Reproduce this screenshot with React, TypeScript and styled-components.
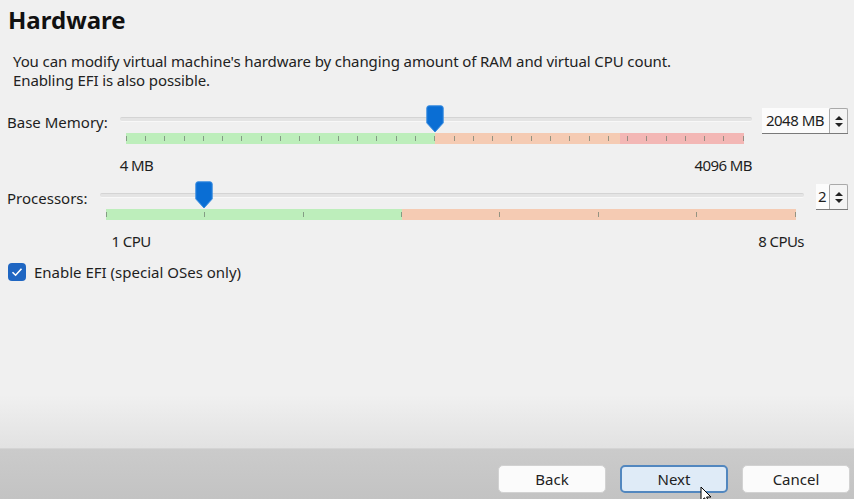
import React from 'react'
import styled, { createGlobalStyle } from 'styled-components'

const GlobalStyle = createGlobalStyle`
  html, body {
    margin: 0;
    padding: 0;
    background: #f0f0f0;
  }
  body {
    font-family: "Noto Sans", "Open Sans", sans-serif;
    color: #1e1e1e;
  }
`

type Zone = { until: number; color: string }

const Wizard = styled.div`
  width: 854px;
  height: 499px;
  display: flex;
  flex-direction: column;
  position: relative;
  overflow: hidden;
`

const Page = styled.div`
  flex: 1;
  padding: 5px 6px 0 7px;
  background: linear-gradient(to bottom, #f0f0f0 0, #f0f0f0 395px, #e2e2e2 447px);
`

const Title = styled.h1`
  margin: 0 0 0 1px;
  font-size: 24px;
  line-height: 30px;
  font-weight: 700;
  color: #111;
`

const Description = styled.p`
  margin: 17px 0 0 6px;
  font-size: 15px;
  line-height: 19px;
  color: #222;
  letter-spacing: -0.1px;
`

const SettingRow = styled.div<{ $top: number }>`
  display: flex;
  align-items: flex-start;
  margin-top: ${p => p.$top}px;
`

const FieldLabel = styled.div<{ $gap: number }>`
  font-size: 15px;
  line-height: 18px;
  margin-top: 8px;
  margin-right: ${p => p.$gap}px;
  white-space: nowrap;
`

const SliderCol = styled.div`
  flex: 1;
  display: flex;
  flex-direction: column;
`

const Track = styled.div`
  position: relative;
  height: 28px;
`

const Groove = styled.div`
  margin-top: 12px;
  height: 3px;
  background: #e4e4e4;
  border-top: 1px solid #d4d4d4;
  border-bottom: 1px solid #f8f8f8;
  border-radius: 2px;
`

const Handle = styled.svg`
  position: absolute;
  top: 0;
  width: 18px;
  height: 28px;
  margin-left: -9px;
`

const Bar = styled.div`
  margin: 0 8px 0 6px;
  height: 11px;
  display: flex;
  justify-content: space-between;
  align-items: center;
`

const Tick = styled.span`
  width: 1px;
  height: 5px;
  background: #6c7a6c;
  opacity: 0.7;
`

const Scale = styled.div<{ $inset: number }>`
  display: flex;
  justify-content: space-between;
  margin-top: 12px;
  padding-left: ${p => p.$inset}px;
  font-size: 15px;
  line-height: 18px;
  letter-spacing: -0.6px;
`

const SpinBox = styled.div<{ $gap: number }>`
  display: flex;
  margin-left: ${p => p.$gap}px;
  margin-top: 3px;
  height: 25px;
  border-bottom: 1px solid #7a7a7a;
`

const SpinValue = styled.div<{ $pad: number }>`
  background: #fcfcfc;
  font-size: 15px;
  line-height: 25px;
  padding: 0 ${p => p.$pad}px 0 ${p => p.$pad - 1}px;
  letter-spacing: -0.5px;
`

const SpinArrows = styled.div`
  width: 17px;
  display: flex;
  flex-direction: column;
  justify-content: center;
  align-items: center;
  gap: 3px;
  background: #f4f4f4;
  border: 1px solid #a9a9a9;
  border-bottom: none;
  border-radius: 2px 2px 0 0;
`

const Arrow = styled.span<{ $down?: boolean }>`
  width: 0;
  height: 0;
  border-left: 4px solid transparent;
  border-right: 4px solid transparent;
  ${p => (p.$down ? 'border-top: 4px solid #222;' : 'border-bottom: 4px solid #222;')}
`

const CheckRow = styled.label`
  display: flex;
  align-items: center;
  gap: 8px;
  margin-top: 13px;
  margin-left: 1px;
  font-size: 15px;
  line-height: 18px;
`

const CheckBox = styled.span`
  width: 18px;
  height: 18px;
  border-radius: 4px;
  background: #1f66c2;
  display: flex;
  align-items: center;
  justify-content: center;
`

const Footer = styled.div`
  height: 51px;
  box-sizing: border-box;
  background: linear-gradient(to bottom, #cbcbcb, #c3c3c3);
  border-top: 1px solid #d4d4d4;
  display: flex;
  justify-content: flex-end;
  align-items: flex-end;
  gap: 14px;
  padding: 0 4px 6px 0;
`

const Button = styled.button<{ $primary?: boolean }>`
  width: 108px;
  height: 28px;
  box-sizing: border-box;
  font-family: "Noto Sans", "Open Sans", sans-serif;
  font-size: 15px;
  color: #222;
  border-radius: 5px;
  background: ${p => (p.$primary ? '#dfebf7' : '#fbfbfb')};
  border: ${p => (p.$primary ? '2px solid #5287bf' : '1px solid #d2d2d2')};
  padding: 0;
`

const Cursor = styled.svg`
  position: absolute;
  left: 700px;
  top: 486px;
  width: 12px;
  height: 18px;
`

function Slider({
  value,
  min,
  max,
  ticks,
  zones,
  minLabel,
  maxLabel,
  inset,
}: {
  value: number
  min: number
  max: number
  ticks: number
  zones: Zone[]
  minLabel: string
  maxLabel: string
  inset: number
}) {
  const pct = ((value - min) / (max - min)) * 100
  let prev = 0
  const stops = zones
    .map(z => {
      const s = `${z.color} ${prev}%, ${z.color} ${z.until}%`
      prev = z.until
      return s
    })
    .join(', ')
  return (
    <SliderCol>
      <Track>
        <Groove />
        <Handle viewBox="0 0 18 28" style={{ left: `calc(6px + (100% - 14px) * ${pct / 100})` }}>
          <path
            d="M3 0.8 H15 Q17.2 0.8 17.2 3 V18 L9 27 L0.8 18 V3 Q0.8 0.8 3 0.8 Z"
            fill="#0a6ed4"
            stroke="#3b8de0"
            strokeWidth="1"
          />
        </Handle>
      </Track>
      <Bar style={{ background: `linear-gradient(to right, ${stops})` }}>
        {Array.from({ length: ticks + 1 }).map((_, i) => (
          <Tick key={i} />
        ))}
      </Bar>
      <Scale $inset={inset}>
        <span>{minLabel}</span>
        <span>{maxLabel}</span>
      </Scale>
    </SliderCol>
  )
}

export default function App() {
  return (
    <>
      <GlobalStyle />
      <Wizard>
        <Page>
          <Title>Hardware</Title>
          <Description>
            You can modify virtual machine's hardware by changing amount of RAM and virtual CPU count.
            <br />
            Enabling EFI is also possible.
          </Description>

          <SettingRow $top={15}>
            <FieldLabel $gap={12}>Base Memory:</FieldLabel>
            <Slider
              value={2048}
              min={4}
              max={4096}
              ticks={32}
              zones={[
                { until: 50, color: '#bdeebb' },
                { until: 80, color: '#f5cbb3' },
                { until: 100, color: '#f3b7b5' },
              ]}
              minLabel="4 MB"
              maxLabel="4096 MB"
              inset={0}
            />
            <SpinBox $gap={10}>
              <SpinValue $pad={5}>2048 MB</SpinValue>
              <SpinArrows>
                <Arrow />
                <Arrow $down />
              </SpinArrows>
            </SpinBox>
          </SettingRow>

          <SettingRow $top={7}>
            <FieldLabel $gap={12}>Processors:</FieldLabel>
            <Slider
              value={2}
              min={1}
              max={8}
              ticks={7}
              zones={[
                { until: 42.9, color: '#bdeebb' },
                { until: 100, color: '#f5cbb3' },
              ]}
              minLabel="1 CPU"
              maxLabel="8 CPUs"
              inset={12}
            />
            <SpinBox $gap={12}>
              <SpinValue $pad={3}>2</SpinValue>
              <SpinArrows>
                <Arrow />
                <Arrow $down />
              </SpinArrows>
            </SpinBox>
          </SettingRow>

          <CheckRow>
            <CheckBox>
              <svg width="12" height="10" viewBox="0 0 12 10">
                <path d="M1.5 5.2 L4.6 8.2 L10.5 1.8" fill="none" stroke="#fff" strokeWidth="1.6" />
              </svg>
            </CheckBox>
            Enable EFI (special OSes only)
          </CheckRow>
        </Page>

        <Footer>
          <Button>Back</Button>
          <Button $primary>Next</Button>
          <Button>Cancel</Button>
        </Footer>

        <Cursor viewBox="0 0 12 18">
          <path d="M1 1 V15 L4.5 11.8 L7 17 L9 16 L6.6 11 H11 Z" fill="#fff" stroke="#000" strokeWidth="1" />
        </Cursor>
      </Wizard>
    </>
  )
}
